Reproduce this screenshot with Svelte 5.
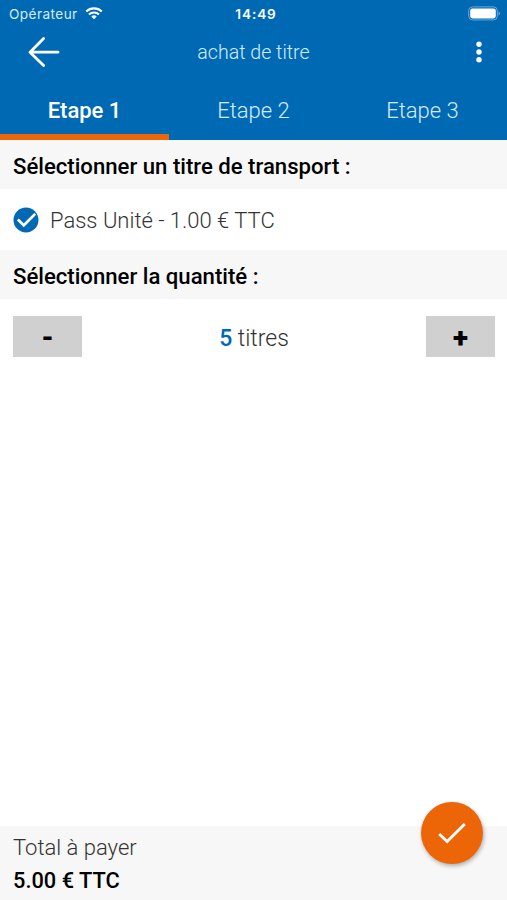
<script lang="ts">
  const steps = ['Etape 1', 'Etape 2', 'Etape 3'];
  const unitPrice = 1;

  let active   = $state(0);
  let quantity = $state(5);
  const total  = $derived((unitPrice * quantity).toFixed(2));
</script>

<div class="screen">
  <header>
    <div class="status">
      <div class="carrier">
        <span>Opérateur</span>
        <svg width="18" height="13" viewBox="0 0 18 13" fill="none" stroke="#fff" stroke-width="2.1">
          <path d="M1.2 4.5a11.2 11.2 0 0 1 15.6 0M4 7.5a7.2 7.2 0 0 1 10 0" />
          <path d="M9 12.2L6.3 9.6a3.9 3.9 0 0 1 5.4 0z" fill="#fff" stroke="none" />
        </svg>
      </div>
      <span class="time">14:49</span>
      <svg class="battery" width="33" height="15" viewBox="0 0 33 15">
        <rect x="0.7" y="0.9" width="28.6" height="13" rx="3.8" fill="none" stroke="#69a9dc" stroke-width="1" />
        <rect x="2.2" y="2.4" width="25.6" height="10" rx="2.3" fill="#fff" />
        <path d="M30.6 5.4q1.4.6 1.4 2t-1.4 2z" fill="#69a9dc" />
      </svg>
    </div>

    <div class="bar">
      <button class="icon-btn" aria-label="Retour">
        <svg width="32" height="30" viewBox="0 0 32 30" fill="none" stroke="#fff" stroke-width="2.8" stroke-linecap="round" stroke-linejoin="round">
          <path d="M15.6 1.6L2 15.2L15.6 28.6M2 15.2H30" />
        </svg>
      </button>
      <h1>achat de titre</h1>
      <button class="icon-btn" aria-label="Menu">
        <svg width="6" height="22" viewBox="0 0 6 22" fill="#fff">
          <circle cx="3" cy="3.3" r="2.7" />
          <circle cx="3" cy="11" r="2.7" />
          <circle cx="3" cy="18.7" r="2.7" />
        </svg>
      </button>
    </div>

    <nav>
      {#each steps as step, i (step)}
        <button class="tab" class:active={i === active} onclick={() => (active = i)}>{step}</button>
      {/each}
    </nav>
  </header>

  <main>
    <h2>Sélectionner un titre de transport :</h2>
    <div class="ticket">
      <svg width="26" height="26" viewBox="0 0 26 26">
        <circle cx="13" cy="13" r="12.5" fill="#0069b4" />
        <path d="M4.8 12.6L10.8 18.3L22.2 6.9" fill="none" stroke="#fff" stroke-width="2.7" />
      </svg>
      <span>Pass Unité - 1.00 € TTC</span>
    </div>

    <h2>Sélectionner la quantité :</h2>
    <div class="quantity">
      <button class="step-btn" onclick={() => (quantity = Math.max(1, quantity - 1))}>-</button>
      <span class="count"><b>{quantity}</b> titres</span>
      <button class="step-btn" onclick={() => (quantity += 1)}>+</button>
    </div>
  </main>

  <footer>
    <span>Total à payer</span>
    <strong>{total} € TTC</strong>
    <button class="fab" aria-label="Valider">
      <svg width="28" height="22" viewBox="0 0 28 22" fill="none" stroke="#fff" stroke-width="2.8">
        <path d="M1.2 12L9.1 19.6L26.8 1.9" />
      </svg>
    </button>
  </footer>
</div>

<style>
  .screen {
    width: 100%;
    height: 100vh;
    display: flex;
    flex-direction: column;
    overflow: hidden;
    background: #fff;
    color: #333;
    font-family: Roboto, "Liberation Sans", sans-serif;
    font-size: 22px;
    font-weight: 300;
  }
  button {
    border: none;
    padding: 0;
    background: none;
    font: inherit;
    color: inherit;
    cursor: pointer;
  }
  svg { display: block; flex-shrink: 0; }

  header {
    height: 140px;
    display: flex;
    flex-direction: column;
    background: #0069b4;
    color: #d5ecff;
  }
  .status {
    height: 27px;
    display: grid;
    grid-template-columns: 1fr auto 1fr;
    align-items: center;
    padding: 0 6px 0 9px;
    font-family: Inter, sans-serif;
    font-size: 13.6px;
    font-weight: 400;
  }
  .carrier { display: flex; align-items: center; gap: 7px; letter-spacing: 0.43px; }
  .time {
    padding-left: 2px;
    color: #fff;
    font-weight: 600;
    letter-spacing: 0.9px;
  }
  .battery { justify-self: end; }
  .bar {
    height: 50px;
    display: grid;
    grid-template-columns: 1fr auto 1fr;
    align-items: center;
    padding: 0 25px 0 28px;
  }
  .icon-btn { justify-self: start; }
  .icon-btn:last-child { justify-self: end; }
  h1 {
    margin: 0;
    padding: 2px 3px 0 0;
    font-size: 19.6px;
    font-weight: 300;
    line-height: 24px;
  }
  nav { flex: 1; display: grid; grid-template-columns: repeat(3, 1fr); }
  .tab {
    padding-top: 10px;
    border-bottom: 6px solid transparent;
  }
  .tab.active {
    border-color: #ec6608;
    color: #fff;
    font-weight: 500;
  }

  main { flex: 1; }
  h2 {
    margin: 0;
    height: 49px;
    padding: 0 13px;
    background: #f7f7f7;
    color: #000;
    font-size: 22.15px;
    font-weight: 500;
    line-height: 52px;
  }
  .ticket {
    height: 61px;
    display: flex;
    align-items: center;
    gap: 11px;
    padding: 0 13px;
  }
  .ticket span { padding-top: 2px; }
  .quantity {
    display: flex;
    align-items: center;
    justify-content: space-between;
    padding: 17px 12px 0 13px;
  }
  .step-btn {
    width: 69px;
    height: 41px;
    background: #d0d0d0;
    color: #000;
    font-size: 28px;
    font-weight: 900;
    line-height: 44px;
  }
  .count { padding-top: 3px; font-size: 23px; }
  .count b { color: #0069b4; font-weight: 500; }

  footer {
    position: relative;
    height: 74px;
    box-sizing: border-box;
    display: flex;
    flex-direction: column;
    padding: 5px 13px 0;
    background: #f7f7f7;
    line-height: 33px;
  }
  footer strong { color: #000; font-size: 21.8px; font-weight: 500; }
  .fab {
    position: absolute;
    top: -24px;
    right: 24px;
    width: 62px;
    height: 62px;
    display: flex;
    align-items: center;
    justify-content: center;
    border-radius: 50%;
    background: #ec6608;
    box-shadow: 1px 2px 4px rgba(0,0,0,0.3);
  }
</style>
